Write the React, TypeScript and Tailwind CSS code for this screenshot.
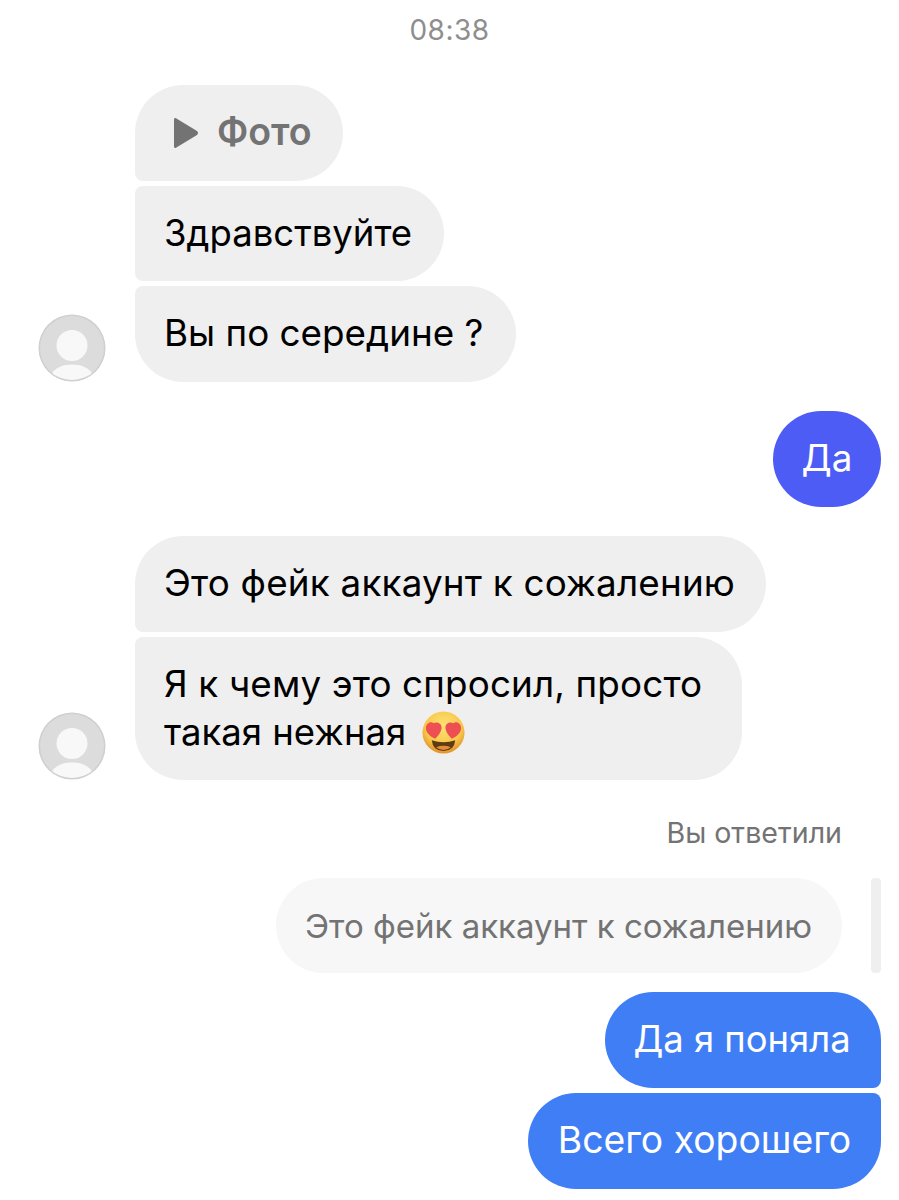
const font = "font-['Inter','Noto_Sans',sans-serif]";

function Avatar() {
  return (
    <svg width="68" height="68" viewBox="0 0 68 68" className="shrink-0">
      <defs>
        <clipPath id="avatarClip"><circle cx="34" cy="34" r="32" /></clipPath>
      </defs>
      <circle cx="34" cy="34" r="33.5" fill="#cfcfcf" />
      <circle cx="34" cy="34" r="32" fill="#dcdcdc" />
      <circle cx="34" cy="31.500" r="15.500" fill="#f8f8f8" />
      <g clipPath="url(#avatarClip)">
        <path d="M12 62 C17 53 25 50.500 34 50.500 C43 50.500 51 53 56 62 Q34 74 12 62Z" fill="#f8f8f8" />
      </g>
    </svg>
  );
}

function Emoji() {
  return (
    <svg width="45" height="45" viewBox="0 0 46 46" className="shrink-0">
      <defs>
        <radialGradient id="face" cx="50%" cy="35%" r="62%">
          <stop offset="0%" stopColor="#fde376" />
          <stop offset="70%" stopColor="#f8c84a" />
          <stop offset="100%" stopColor="#e4982c" />
        </radialGradient>
      </defs>
      <circle cx="23" cy="23" r="21.500" fill="url(#face)" />
      <path d="M11 31 Q23 35 35 31 Q34 42 23 42 Q12 42 11 31Z" fill="#5d3b14" />
      <path d="M15.500 38 Q23 35 30.500 38 Q27 41 23 41 Q19 41 15.500 38Z" fill="#e8893c" />
      <path d="M14.500 29.500 C9 27 5 23 5 18.500 C5 14 9.500 11 13 13.500 C17 11.500 21.500 14 21 19 C20.500 23 17.500 26.500 14.500 29.500Z" fill="#ee4f52" />
      <path d="M31.500 29.500 C37 27 41 23 41 18.500 C41 14 36.500 11 33 13.500 C29 11.500 24.500 14 25 19 C25.500 23 28.500 26.500 31.500 29.500Z" fill="#ee4f52" />
    </svg>
  );
}

export default function App() {
  return (
    <div className={`${font} relative flex h-[1200px] w-[899px] flex-col overflow-hidden bg-white text-[36.800px] leading-[48px] text-black`}>
      <div className="flex h-[60px] items-center justify-center text-[28px] tracking-[0.5px] text-[#8e8e8e]">08:38</div>

      <div className="mt-[25px] flex flex-col gap-[5px] pl-[135px]">
        <div className="flex h-[96px] w-[208px] items-center gap-[18px] rounded-[48px] rounded-bl-[8px] bg-[#efefef] pb-[3px] pl-[38px] text-[37.500px] font-semibold text-[#737373]">
          <svg width="26" height="32" viewBox="0 0 26 32" className="mt-[3px] shrink-0">
            <path d="M1 2.500 Q1 0.500 3 1.200 L24 14 Q26 16 24 18 L3 30.800 Q1 31.500 1 29.500Z" fill="#737373" />
          </svg>
          <span>Фото</span>
        </div>
        <div className="flex h-[95px] w-[309px] items-center rounded-[48px] rounded-l-[8px] bg-[#efefef] pb-[2px] pl-[29px] text-[36.500px]">Здравствуйте</div>
        <div className="relative flex h-[96px] w-[381px] items-center rounded-[48px] rounded-tl-[8px] bg-[#efefef] pb-[2px] pl-[29px]">
          Вы по середине ?
          <div className="absolute bottom-0 left-[-97px]"><Avatar /></div>
        </div>
      </div>

      <div className="mt-[29px] flex justify-end pr-[18px]">
        <div className="flex h-[96px] w-[108px] items-center justify-center rounded-[48px] bg-[#4c5cf5] pb-[2px] text-white">Да</div>
      </div>

      <div className="mt-[29px] flex flex-col gap-[5px] pl-[135px]">
        <div className="flex h-[96px] w-[631px] items-center rounded-[48px] rounded-bl-[8px] bg-[#efefef] pb-[2px] pl-[29px] tracking-[0.2px]">Это фейк аккаунт к сожалению</div>
        <div className="relative h-[143px] w-[607px] rounded-[48px] rounded-tl-[8px] bg-[#efefef] pl-[29px] pt-[23px]">
          <div className="tracking-[0.15px]">Я к чему это спросил, просто</div>
          <div className="flex items-center gap-[15px] text-[36.500px]">такая нежная <Emoji /></div>
          <div className="absolute bottom-0 left-[-97px]"><Avatar /></div>
        </div>
      </div>

      <div className="mt-[37px] flex justify-end pr-[57px] text-[28.600px] leading-[32px] text-[#737373]">Вы ответили</div>

      <div className="mt-[29px] flex justify-end gap-[29px] pr-[18px]">
        <div className="flex h-[95px] w-[566px] items-center rounded-[48px] bg-[#f7f7f7] pl-[29px] text-[33px] text-[#737373]">Это фейк аккаунт к сожалению</div>
        <div className="h-[95px] w-[10px] rounded-[4px] bg-[#efefef]" />
      </div>

      <div className="mt-[19px] flex flex-col items-end gap-[5px] pr-[18px] text-white">
        <div className="flex h-[96px] w-[276px] items-center justify-center rounded-[48px] rounded-br-[8px] bg-[#3f7ef5] pb-[2px] pr-[2px] text-[36.400px]">Да я поняла</div>
        <div className="flex h-[96px] w-[353px] items-center justify-center rounded-[48px] rounded-tr-[8px] bg-[#3f7ef5] pb-[2px] text-[37.300px]">Всего хорошего</div>
      </div>
    </div>
  );
}
